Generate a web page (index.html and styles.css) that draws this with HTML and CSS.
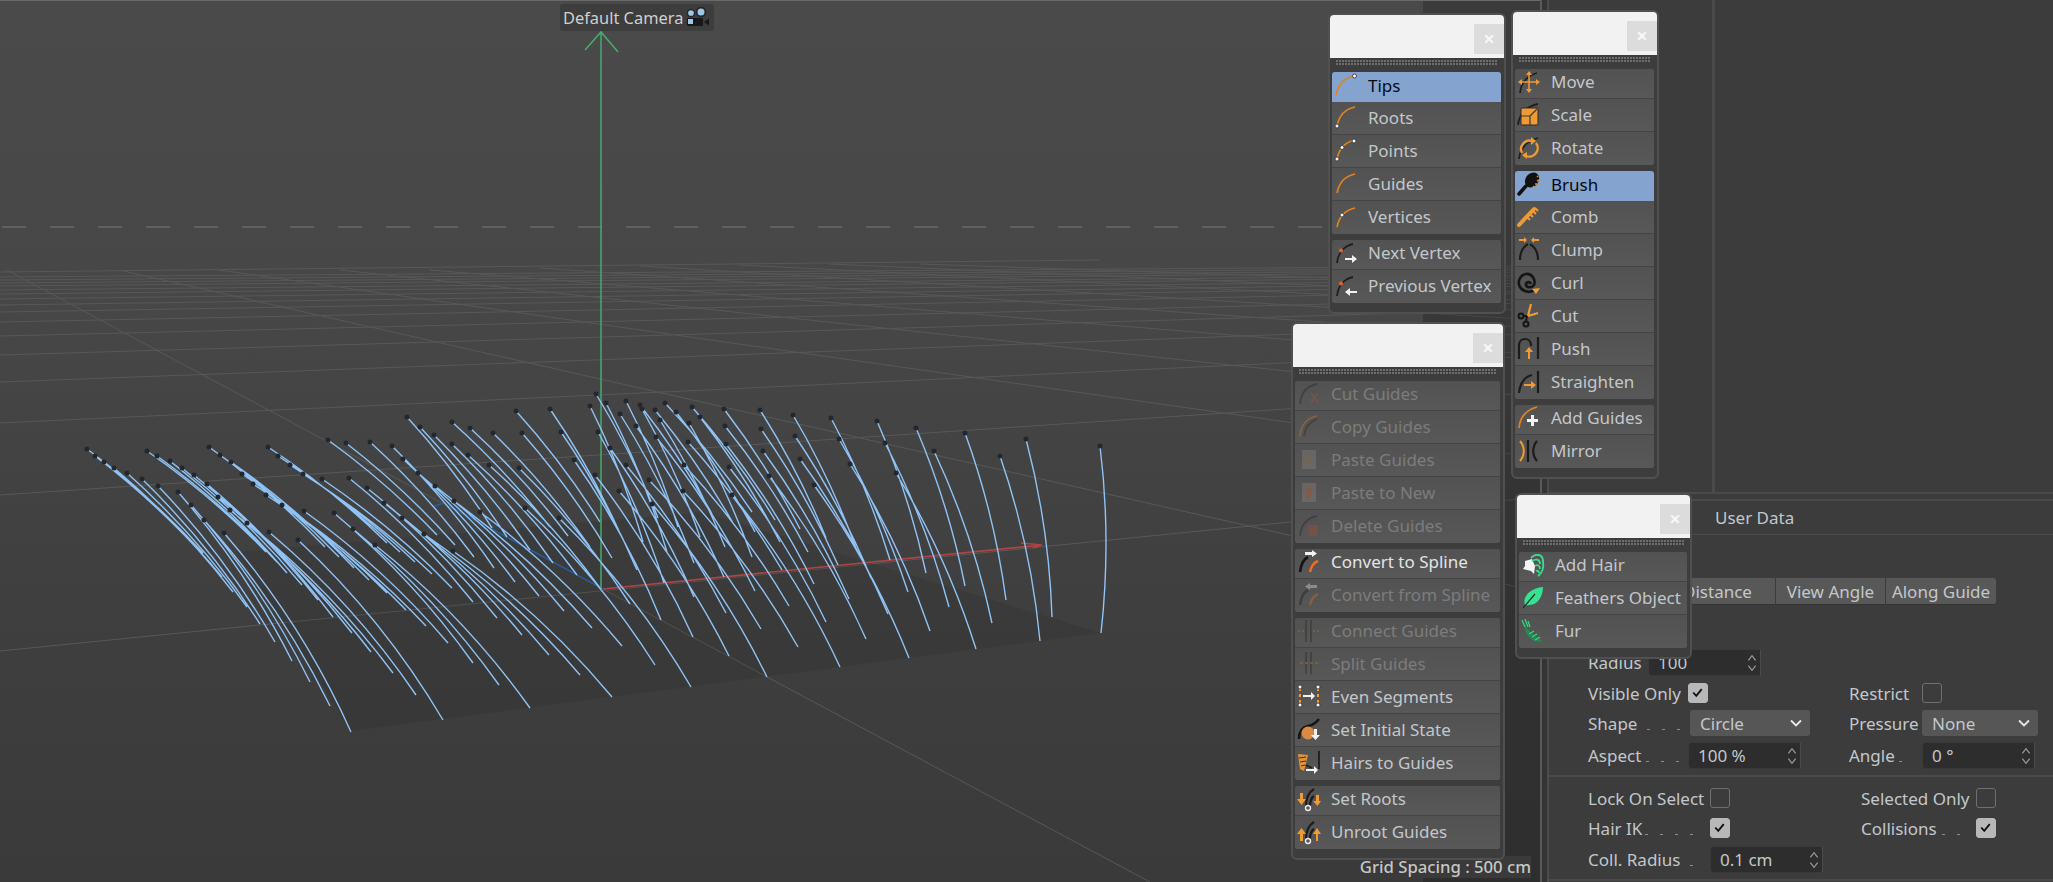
FILE: index.html
```html
<!DOCTYPE html>
<html lang="en">
<head>
<meta charset="utf-8">
<title>Hair tools</title>
<link rel="stylesheet" href="styles.css">
</head>
<body>
<div class="app">
  <main class="viewport">
    <svg class="scene" width="1540" height="882" viewBox="0 0 1540 882">
      <path class="grid" d="M0 651L1540 497M0 495L1540 392M0 423L1540 351M0 382L1540 325M0 355L1540 309M0 336L1540 299M0 322L1540 291M0 312L1540 286M0 305L1540 283M0 299L1540 280M0 294L1540 277M0 290L1540 275M0 286L1540 272M0 283L1540 270M0 280L1540 268M0 277L1540 266M0 272L1100 260M7 270L1150 882M119 270L1540 592M219 270L1540 458M340 270L1540 398M430 270L1540 360M540 268L1540 337M640 266L1540 320M740 265L1540 305M830 264L1540 295M920 264L1540 285"/>
      <path class="horizon" d="M2 227H1330"/>
      <path class="plane" d="M237 552L703 512L1101 633L351 731Z"/>
      <path class="axis-blue" d="M603 589L444 503L434 506"/>
      <path class="axis-red" d="M603 589L1042 545L1021 543M1042 545L1033 548"/>
      <path class="axis-green" d="M601 589V32M585 50L601 32L618 52"/>
      <path class="hairs" d="M87 449A800 800 0 0 1 203 553M95 456A800 800 0 0 1 212 565M104 462A800 800 0 0 1 222 577M114 468A800 800 0 0 1 233 592M127 473A800 800 0 0 1 247 607M142 479A800 800 0 0 1 260 624M158 486A800 800 0 0 1 275 642M178 492A800 800 0 0 1 292 661M191 505A800 800 0 0 1 310 682M204 520A800 800 0 0 1 330 706M224 533A800 800 0 0 1 351 732
      M147 451A800 800 0 0 1 266 552M157 456A800 800 0 0 1 277 562M170 461A800 800 0 0 1 287 573M182 468A800 800 0 0 1 302 585M194 475A800 800 0 0 1 318 600M207 484A800 800 0 0 1 333 617M218 497A800 800 0 0 1 352 633M230 510A800 800 0 0 1 371 652M247 523A800 800 0 0 1 393 673M269 532A800 800 0 0 1 416 695M298 540A800 800 0 0 1 443 720
      M209 447A800 800 0 0 1 325 547M220 455A800 800 0 0 1 339 557M231 462A800 800 0 0 1 354 568M242 474A800 800 0 0 1 369 580M253 484A800 800 0 0 1 387 593M266 495A800 800 0 0 1 406 610M282 505A800 800 0 0 1 426 626M304 511A800 800 0 0 1 448 643M334 513A800 800 0 0 1 473 663M353 529A800 800 0 0 1 499 685M375 545A800 800 0 0 1 530 708
      M268 447A800 800 0 0 1 387 543M278 456A800 800 0 0 1 400 552M290 465A800 800 0 0 1 415 562M303 474A800 800 0 0 1 432 574M322 479A800 800 0 0 1 452 588M349 478A800 800 0 0 1 473 602M367 488A800 800 0 0 1 497 618M384 503A800 800 0 0 1 522 635M402 518A800 800 0 0 1 549 655M424 534A800 800 0 0 1 580 675M453 551A800 800 0 0 1 612 697
      M328 440A800 800 0 0 1 437 535M346 443A800 800 0 0 1 455 545M370 442A800 800 0 0 1 474 557M392 446A800 800 0 0 1 494 568M403 459A800 800 0 0 1 515 582M418 473A800 800 0 0 1 539 596M435 486A800 800 0 0 1 564 611M454 501A800 800 0 0 1 592 628M480 512A800 800 0 0 1 622 646M525 508A800 800 0 0 1 655 665M559 518A800 800 0 0 1 691 687
      M407 417A800 800 0 0 1 492 528M420 427A800 800 0 0 1 507 537M434 435A800 800 0 0 1 530 550M452 444A800 800 0 0 1 553 563M468 455A800 800 0 0 1 577 575M489 465A800 800 0 0 1 600 588M519 468A800 800 0 0 1 630 604M574 460A800 800 0 0 1 661 620M595 475A800 800 0 0 1 693 637M619 491A800 800 0 0 1 729 656M652 504A800 800 0 0 1 767 677
      M452 422A800 800 0 0 1 550 527M470 428A800 800 0 0 1 568 536M493 433A800 800 0 0 1 590 547M522 433A800 800 0 0 1 612 558M561 432A800 800 0 0 1 637 570M598 432A800 800 0 0 1 664 583M610 448A800 800 0 0 1 694 597M626 465A800 800 0 0 1 726 613M649 480A800 800 0 0 1 761 629M683 491A800 800 0 0 1 798 647M732 495A800 800 0 0 1 840 667
      M516 411A800 800 0 0 1 600 522M550 409A800 800 0 0 1 619 531M590 406A800 800 0 0 1 643 542M606 403A800 800 0 0 1 667 552M620 414A800 800 0 0 1 694 563M636 426A800 800 0 0 1 724 577M656 437A800 800 0 0 1 755 591M684 465A800 800 0 0 1 789 606M729 467A800 800 0 0 1 826 622M769 476A800 800 0 0 1 866 639M814 485A800 800 0 0 1 909 658
      M596 394A800 800 0 0 1 658 518M626 401A800 800 0 0 1 678 527M642 409A800 800 0 0 1 700 537M660 420A800 800 0 0 1 725 547M689 423A800 800 0 0 1 752 557M688 442A800 800 0 0 1 782 570M726 444A800 800 0 0 1 814 584M763 451A800 800 0 0 1 849 599M800 459A800 800 0 0 1 888 614M850 464A800 800 0 0 1 930 631M896 473A800 800 0 0 1 976 649
      M640 405A800 800 0 0 1 712 514M655 410A800 800 0 0 1 733 523M676 412A800 800 0 0 1 755 532M700 417A800 800 0 0 1 780 542M725 426A800 800 0 0 1 808 552M761 429A800 800 0 0 1 838 565M795 436A800 800 0 0 1 871 578M839 439A800 800 0 0 1 908 592M885 443A800 800 0 0 1 949 607M934 451A800 800 0 0 1 992 623M1000 456A800 800 0 0 1 1040 641
      M665 403A800 800 0 0 1 752 512M692 407A800 800 0 0 1 775 520M724 409A800 800 0 0 1 800 529M760 410A800 800 0 0 1 826 538M793 415A800 800 0 0 1 856 548M831 418A800 800 0 0 1 890 560M877 421A800 800 0 0 1 926 573M916 428A800 800 0 0 1 965 586M965 433A800 800 0 0 1 1006 600M1026 439A800 800 0 0 1 1052 617M1100 446A800 800 0 0 1 1101 633"/>
      <path class="roots" d="M87 449h0M95 456h0M104 462h0M114 468h0M127 473h0M142 479h0M158 486h0M178 492h0M191 505h0M204 520h0M224 533h0M147 451h0M157 456h0M170 461h0M182 468h0M194 475h0M207 484h0M218 497h0M230 510h0M247 523h0M269 532h0M298 540h0M209 447h0M220 455h0M231 462h0M242 474h0M253 484h0M266 495h0M282 505h0M304 511h0M334 513h0M353 529h0M375 545h0M268 447h0M278 456h0M290 465h0M303 474h0M322 479h0M349 478h0M367 488h0M384 503h0M402 518h0M424 534h0M453 551h0M328 440h0M346 443h0M370 442h0M392 446h0M403 459h0M418 473h0M435 486h0M454 501h0M480 512h0M525 508h0M559 518h0M407 417h0M420 427h0M434 435h0M452 444h0M468 455h0M489 465h0M519 468h0M574 460h0M595 475h0M619 491h0M652 504h0M452 422h0M470 428h0M493 433h0M522 433h0M561 432h0M598 432h0M610 448h0M626 465h0M649 480h0M683 491h0M732 495h0M516 411h0M550 409h0M590 406h0M606 403h0M620 414h0M636 426h0M656 437h0M684 465h0M729 467h0M769 476h0M814 485h0M596 394h0M626 401h0M642 409h0M660 420h0M689 423h0M688 442h0M726 444h0M763 451h0M800 459h0M850 464h0M896 473h0M640 405h0M655 410h0M676 412h0M700 417h0M725 426h0M761 429h0M795 436h0M839 439h0M885 443h0M934 451h0M1000 456h0M665 403h0M692 407h0M724 409h0M760 410h0M793 415h0M831 418h0M877 421h0M916 428h0M965 433h0M1026 439h0M1100 446h0"/>
    </svg>
    <div class="shade"></div>
    <div class="camera-label">
      <span>Default Camera</span>
      <svg width="26" height="22" viewBox="0 0 26 22"><circle cx="6" cy="6" r="3.6" fill="#9cc8e8" stroke="#23262c" stroke-width="1.5"/><circle cx="16" cy="5" r="4.4" fill="#9cc8e8" stroke="#23262c" stroke-width="1.8"/><rect x="2" y="11" width="16" height="8" rx="1" fill="#16181c"/><rect x="3" y="12" width="5" height="5" fill="#9cc8e8"/><path d="M19 15l5-3.5v7z" fill="#16181c"/></svg>
    </div>
    <div class="grid-spacing">Grid Spacing : 500 cm</div>
  </main>

  <div class="gutter"></div>

  <aside class="side">
    <div class="objects"><div class="objects-col"></div></div>
    <section class="attrs">
      <header class="attrs-head">
        <span>User Data</span>
        <span class="nav">
          <svg width="26" height="20" viewBox="0 0 26 20"><path d="M25 10H4M11 2L3 10l8 8" fill="none" stroke="#a6a6a6" stroke-width="3"/></svg>
          <svg width="24" height="20" viewBox="0 0 24 20"><path d="M0 10h21M14 2l8 8-8 8" fill="none" stroke="#565656" stroke-width="3"/></svg>
        </span>
      </header>
      <div class="tabs">
        <span class="tab tab-distance">Distance</span>
        <span class="tab tab-view">View Angle</span>
        <span class="tab tab-along">Along Guide</span>
      </div>
      <div class="row row-radius">
        <span class="lbl lbl-radius">Radius</span>
        <span class="field field-radius">100<svg class="spin" viewBox="0 0 12 22"><path d="M2 8l4-5 4 5M2 14l4 5 4-5"/></svg></span>
      </div>
      <div class="row">
        <div class="cell">
          <span class="lbl lbl-a">Visible Only</span>
          <span class="check on"><svg viewBox="0 0 20 20"><path d="M5 10l3.5 4L15 6"/></svg></span>
        </div>
        <div class="cell">
          <span class="lbl lbl-r">Restrict</span>
          <span class="check"></span>
        </div>
      </div>
      <div class="row">
        <div class="cell">
          <span class="lbl lbl-b"><span>Shape</span><i class="dots d3"></i></span>
          <span class="select select-shape">Circle<svg class="chev" viewBox="0 0 12 8"><path d="M1 1.500l5 5 5-5"/></svg></span>
        </div>
        <div class="cell">
          <span class="lbl lbl-r">Pressure</span>
          <span class="select select-pressure">None<svg class="chev" viewBox="0 0 12 8"><path d="M1 1.500l5 5 5-5"/></svg></span>
        </div>
      </div>
      <div class="row row-aspect">
        <div class="cell">
          <span class="lbl lbl-a"><span>Aspect</span><i class="dots d3"></i></span>
          <span class="field field-aspect">100 %<svg class="spin" viewBox="0 0 12 22"><path d="M2 8l4-5 4 5M2 14l4 5 4-5"/></svg></span>
        </div>
        <div class="cell">
          <span class="lbl lbl-r lbl-angle"><span>Angle</span><i class="dots d1"></i></span>
          <span class="field field-aspect">0 °<svg class="spin" viewBox="0 0 12 22"><path d="M2 8l4-5 4 5M2 14l4 5 4-5"/></svg></span>
        </div>
      </div>
      <div class="sep sep-mid"></div>
      <div class="row">
        <div class="cell cell-low">
          <span class="lbl lbl-c">Lock On Select</span>
          <span class="check"></span>
        </div>
        <div class="cell">
          <span class="lbl lbl-s">Selected Only</span>
          <span class="check"></span>
        </div>
      </div>
      <div class="row">
        <div class="cell cell-low">
          <span class="lbl lbl-c lbl-pad"><span>Hair IK</span><i class="dots d4"></i></span>
          <span class="check on"><svg viewBox="0 0 20 20"><path d="M5 10l3.5 4L15 6"/></svg></span>
        </div>
        <div class="cell">
          <span class="lbl lbl-s lbl-coll"><span>Collisions</span><i class="dots d2"></i></span>
          <span class="check on"><svg viewBox="0 0 20 20"><path d="M5 10l3.5 4L15 6"/></svg></span>
        </div>
      </div>
      <div class="row row-coll">
        <span class="lbl lbl-c lbl-pad"><span>Coll. Radius</span><i class="dots d1"></i></span>
        <span class="field field-aspect">0.1 cm<svg class="spin" viewBox="0 0 12 22"><path d="M2 8l4-5 4 5M2 14l4 5 4-5"/></svg></span>
      </div>
      <div class="sep sep-end"></div>
    </section>
  </aside>

  <!-- Floating tool palettes -->
  <div class="palette p-select">
    <div class="title"><span class="close">×</span></div>
    <div class="grip"></div>
    <div class="group">
      <div class="item active"><svg class="ic" viewBox="0 0 24 24"><path class="o" d="M2 22C4 12 10 5 20 3"/><circle class="w" cx="20.500" cy="3" r="2"/></svg>Tips</div>
      <div class="item"><svg class="ic" viewBox="0 0 24 24"><path class="o" d="M3 21C5 11 11 4 21 2"/><circle class="w" cx="3" cy="21" r="2"/></svg>Roots</div>
      <div class="item"><svg class="ic" viewBox="0 0 24 24"><path class="o" d="M3 21C5 11 11 4 21 2"/><circle class="w" cx="3" cy="21" r="2"/><circle class="w" cx="8" cy="9.500" r="2"/><circle class="w" cx="20" cy="3" r="2"/></svg>Points</div>
      <div class="item"><svg class="ic" viewBox="0 0 24 24"><path class="o" d="M3 22C5 12 11 5 21 3"/></svg>Guides</div>
      <div class="item"><svg class="ic" viewBox="0 0 24 24"><path class="o" d="M3 22C5 12 11 5 21 3"/><circle class="w" cx="8" cy="10" r="2"/></svg>Vertices</div>
    </div>
    <div class="group">
      <div class="item"><svg class="ic" viewBox="0 0 24 24"><path class="k" d="M3 22C4 12 10 5 19 3"/><circle cx="7" cy="9.500" r="2" fill="#e8602c"/><path class="wf" d="M11 17h7v-3l5 4-5 4v-3h-7z"/></svg>Next Vertex</div>
      <div class="item"><svg class="ic" viewBox="0 0 24 24"><path class="k" d="M3 22C4 12 10 5 19 3"/><circle cx="7" cy="9.500" r="2" fill="#e8602c"/><path class="wf" d="M23 17h-7v-3l-5 4 5 4v-3h7z"/></svg>Previous Vertex</div>
    </div>
  </div>

  <div class="palette p-tools">
    <div class="title"><span class="close">×</span></div>
    <div class="grip"></div>
    <div class="group">
      <div class="item"><svg class="ic" viewBox="0 0 24 24"><path class="k" d="M3 23C4 13 10 6 20 3"/><path class="o1" d="M3 12h18M12 3v18"/><path class="of" d="M12 1l3 4H9zM12 23l3-4H9zM23 12l-4 3V9zM1 12l4 3V9z"/></svg>Move</div>
      <div class="item"><svg class="ic" viewBox="0 0 24 24"><path class="k" d="M1 23C2 12 10 4 21 2"/><rect x="4" y="6" width="17" height="17" rx="1" fill="#f09a33" stroke="#2a2a2a"/><path d="M4 14h9v9M13 14l7-7" fill="none" stroke="#3a3a3a" stroke-width="1.200"/></svg>Scale</div>
      <div class="item"><svg class="ic" viewBox="0 0 24 24"><path class="k" d="M2 23C3 12 10 5 21 2"/><path d="M5 17A8.500 8.500 0 0 1 15 5M19 7A8.500 8.500 0 0 1 9 20" fill="none" stroke="#f09a33" stroke-width="2.400"/><path class="of" d="M14 1l5 4-5 4zM10 23l-5-4 5-3z"/></svg>Rotate</div>
    </div>
    <div class="group">
      <div class="item active"><svg class="ic" viewBox="0 0 24 24"><path d="M2 22l7-8" fill="none" stroke="#111" stroke-width="3.500" stroke-linecap="round"/><ellipse cx="15" cy="8" rx="6.500" ry="8" transform="rotate(40 15 8)" fill="#111"/><path d="M21 4l-1 1M22 8l-2 1M20 12l-2 0M17 15l-1-1" stroke="#e38a26" stroke-width="1.500"/></svg>Brush</div>
      <div class="item"><svg class="ic" viewBox="0 0 24 24"><path d="M2 21L17 5" fill="none" stroke="#f09a33" stroke-width="4" stroke-linecap="round"/><path d="M10 13l3 3M13 10l3 3M16 7l3 3M18 4l3 3" stroke="#f09a33" stroke-width="2"/></svg>Comb</div>
      <div class="item"><svg class="ic" viewBox="0 0 24 24"><path class="k2" d="M3 23C3 15 6 10 11 7M21 23C21 15 18 10 13 7"/><path class="of" d="M2 2h5V0l3 3-3 3V4H2zM22 2h-5V0l-3 3 3 3V4h5z"/></svg>Clump</div>
      <div class="item"><svg class="ic" viewBox="0 0 24 24"><path d="M14 14c-1-3-6-2-5 1s6 3 8 0c2-5-2-12-8-11C3 5 0 12 3 17s11 6 14 3" fill="none" stroke="#151515" stroke-width="2.600"/><path class="of" d="M15 19l8-1-4 6z"/></svg>Curl</div>
      <div class="item"><svg class="ic" viewBox="0 0 24 24"><circle cx="4" cy="13" r="2.500" fill="none" stroke="#151515" stroke-width="2"/><circle cx="9" cy="21" r="2.500" fill="none" stroke="#151515" stroke-width="2"/><path d="M6 13h5M9 18l1-5" stroke="#151515" stroke-width="2"/><path d="M11 13L14 1M11 13l10-3" stroke="#f09a33" stroke-width="2.200" fill="none"/></svg>Cut</div>
      <div class="item"><svg class="ic" viewBox="0 0 24 24"><path class="k2" d="M2 23V9c0-8 12-8 12 0v1M21 1v22"/><path class="of" d="M11 23v-7H8l4-5 4 5h-3v7z"/></svg>Push</div>
      <div class="item"><svg class="ic" viewBox="0 0 24 24"><path class="k2" d="M2 23C3 13 7 7 15 5M21 1v22"/><path class="of" d="M7 14h7v-3l5 4-5 4v-3H7z"/></svg>Straighten</div>
    </div>
    <div class="group">
      <div class="item"><svg class="ic" viewBox="0 0 24 24"><path class="o" d="M2 22C3 11 9 4 20 1"/><path class="wf" d="M14 9h3v4h4v3h-4v4h-3v-4h-4v-3h4z"/></svg>Add Guides</div>
      <div class="item"><svg class="ic" viewBox="0 0 24 24"><path class="o2" d="M3 2c5 6 5 14 0 20"/><path class="k2" d="M11 1v22M20 2c-5 6-5 14 0 20"/></svg>Mirror</div>
    </div>
  </div>

  <div class="palette p-edit">
    <div class="title"><span class="close">×</span></div>
    <div class="grip"></div>
    <div class="group">
      <div class="item off"><svg class="ic" viewBox="0 0 24 24"><path class="k" d="M3 22C4 11 10 4 20 2"/><path d="M14 11l7 10M21 11l-7 10" stroke="#b0553a" stroke-width="1.400"/></svg>Cut Guides</div>
      <div class="item off"><svg class="ic" viewBox="0 0 24 24"><path class="o" d="M3 22C4 11 10 4 20 2"/><path class="k" d="M7 22C8 13 12 8 20 5"/></svg>Copy Guides</div>
      <div class="item off"><svg class="ic" viewBox="0 0 24 24"><rect x="5" y="3" width="14" height="19" fill="#8a8a8a"/><path d="M8 19c0-5 3-9 8-10" fill="none" stroke="#d97c1e" stroke-width="2.500"/></svg>Paste Guides</div>
      <div class="item off"><svg class="ic" viewBox="0 0 24 24"><rect x="5" y="3" width="14" height="19" fill="#8a8a8a"/><path d="M8 8h8l-1 6-3 6-3-4z" fill="#d0683a"/></svg>Paste to New</div>
      <div class="item off"><svg class="ic" viewBox="0 0 24 24"><path class="k" d="M3 22C4 11 10 4 20 2"/><path d="M11 11h10l-1 11h-8z" fill="#a84a36"/></svg>Delete Guides</div>
    </div>
    <div class="group">
      <div class="item on"><svg class="ic" viewBox="0 0 24 24"><path class="k3" d="M3 22C4 14 7 9 11 7"/><path d="M13 22c1-5 3-9 8-11" fill="none" stroke="#f06a24" stroke-width="2.500"/><path class="wf" d="M8 2h7V0l5 3.500-5 3.500V5H8z"/></svg>Convert to Spline</div>
      <div class="item off"><svg class="ic" viewBox="0 0 24 24"><path class="k3" d="M3 22C4 14 7 9 11 7"/><path d="M13 22c1-5 3-9 8-11" fill="none" stroke="#f06a24" stroke-width="2.500"/><path class="wf" d="M20 2h-7V0L8 3.500 13 7V5h7z"/></svg>Convert from Spline</div>
    </div>
    <div class="group">
      <div class="item off"><svg class="ic" viewBox="0 0 24 24"><path class="k" d="M9 1v22M14 1v22"/><path d="M1 12h6M16 12h6" stroke="#d97c1e" stroke-dasharray="2 2" stroke-width="1.500"/></svg>Connect Guides</div>
      <div class="item off"><svg class="ic" viewBox="0 0 24 24"><path class="k" d="M9 1v22M14 1v22"/><path d="M3 12h18" stroke="#d97c1e" stroke-dasharray="3 2" stroke-width="1.500"/></svg>Split Guides</div>
      <div class="item"><svg class="ic" viewBox="0 0 24 24"><path d="M3 4v16M21 4v16" stroke="#f09a33" stroke-width="2" stroke-dasharray="3 3"/><circle class="w" cx="3" cy="3" r="2"/><circle class="w" cx="3" cy="21" r="2"/><circle class="w" cx="21" cy="3" r="2"/><circle class="w" cx="21" cy="21" r="2"/><path class="wf" d="M6 11h8V8l4 4-4 4v-3H6z"/></svg>Even Segments</div>
      <div class="item"><svg class="ic" viewBox="0 0 24 24"><path class="k3" d="M2 22C2 13 6 10 11 9s8-3 11-7"/><circle cx="11" cy="16" r="6.500" fill="#d98a45"/><path class="wf" d="M17 12h3v6h3l-4.500 5-4.500-5h3z"/></svg>Set Initial State</div>
      <div class="item"><svg class="ic" viewBox="0 0 24 24"><path d="M1 3l10 1-4 16-4-2z" fill="#e59434"/><path d="M2 7l7-1M3 11l6-1M4 15l4-1" stroke="#333" stroke-width="1"/><path class="k" d="M9 14l6 3M22 0v18"/><path class="wf" d="M9 18h8v-3l4 4-4 4v-3H9z"/></svg>Hairs to Guides</div>
    </div>
    <div class="group">
      <div class="item"><svg class="ic" viewBox="0 0 24 24"><path class="k2" d="M9 19C9 11 12 5 17 2M13 19c0-5 1-8 4-10"/><circle cx="11" cy="21" r="2.500" fill="none" stroke="#e8e8e8" stroke-width="1.400"/><path class="of" d="M3 6h3v6h3l-4.500 6L0 12h3zM19 8h3v6h2l-3.500 5-4.500-5h3z"/></svg>Set Roots</div>
      <div class="item"><svg class="ic" viewBox="0 0 24 24"><path class="k2" d="M9 19C9 11 12 5 17 2M13 19c0-5 1-8 4-10"/><circle cx="11" cy="21" r="2.500" fill="none" stroke="#e8e8e8" stroke-width="1.400"/><path class="of" d="M3 21v-7H0l4.500-6L9 14H6v7zM19 21v-7h-3l4-6 4 6h-3v7z"/></svg>Unroot Guides</div>
    </div>
  </div>

  <div class="palette p-hair">
    <div class="title"><span class="close">×</span></div>
    <div class="grip"></div>
    <div class="group">
      <div class="item"><svg class="ic" viewBox="0 0 24 24"><path d="M4 8L11 6l3 7-1 8-3-3-8-2 2-3z" fill="#f4f4f4"/><path d="M10 5c4-5 12-4 12 3 1 6-1 12-5 15M11 8c5-3 8-1 8 3M14 13c3-2 5 0 5 3M15 18c2-1 3 1 3 2" fill="none" stroke="#3fdc8c" stroke-width="1.800"/></svg>Add Hair</div>
      <div class="item"><svg class="ic" viewBox="0 0 24 24"><path d="M4 20C1 12 9 3 22 2c0 10-6 20-18 18z" fill="#35e28f"/><path d="M2 23L14 9" stroke="#2b2b2b" stroke-width="1.200"/></svg>Feathers Object</div>
      <div class="item"><svg class="ic" viewBox="0 0 24 24"><path d="M3 3c3 6 5 9 9 12s6 5 10 7c-6 2-10 0-14-4S4 9 3 3z" fill="#1f8a52"/><path d="M1 1l3 7M4 0l3 8M7 2l2 6M8 15l5-3M11 18l5-3M14 21l5-3" stroke="#39d884" stroke-width="1.200"/></svg>Fur</div>
    </div>
  </div>
</div>
</body>
</html>
```
FILE: styles.css
```css
* { box-sizing: border-box; }
html, body { margin: 0; padding: 0; background: #3c3c3c; }
body {
  font-family: "Noto Sans", "Open Sans", sans-serif;
  font-size: 17px;
  color: #c3c7cb;
  overflow: hidden;
}
.app {
  position: relative;
  display: flex;
  width: 2053px;
  height: 882px;
  overflow: hidden;
}

/* ---------- 3D viewport ---------- */
.viewport {
  position: relative;
  flex: 0 0 1540px;
  height: 882px;
  background: linear-gradient(180deg, #4a4a4a 0, #474747 300px, #3f3f3f 600px, #3a3a3a 882px);
  border-top: 1px solid #6a6a6a;
  overflow: hidden;
}
.scene { display: block; position: absolute; left: 0; top: -1px; }
.grid { fill: none; stroke: #585858; stroke-width: 1; }
.horizon { fill: none; stroke: #686868; stroke-width: 1.4; stroke-dasharray: 24 24; }
.plane { fill: rgba(0, 0, 0, 0.08); }
.axis-blue { fill: none; stroke: #1f5fa8; stroke-width: 1.4; }
.axis-red { fill: none; stroke: #b04444; stroke-width: 1.6; }
.axis-green { fill: none; stroke: #47ab6c; stroke-width: 1.5; }
.hairs { fill: none; stroke: #8fc3f5; stroke-width: 1.4; }
.roots { fill: none; stroke: #23272e; stroke-width: 5; stroke-linecap: round; }
.shade {
  position: absolute;
  left: 1423px;
  right: 0;
  top: 0;
  bottom: 0;
  background: rgba(0, 0, 0, 0.2);
}
.camera-label {
  position: absolute;
  left: 560px;
  top: 3px;
  width: 154px;
  height: 27px;
  display: flex;
  align-items: center;
  gap: 2px;
  padding-left: 3px;
  border-radius: 3px;
  background: #3d3d3d;
  color: #cfcfcf;
  font-size: 16.400px;
  white-space: nowrap;
}
.grid-spacing {
  position: absolute;
  right: 9px;
  bottom: 4px;
  height: 22px;
  padding-left: 4px;
  line-height: 22px;
  background: #3a3a3a;
  color: #c6c6c6;
  font-weight: 500;
  font-size: 16.700px;
  white-space: nowrap;
}

/* ---------- side panels ---------- */
.gutter {
  flex: 0 0 9px;
  background: #343434;
  border-left: 2px solid #5a5a5a;
  border-right: 2px solid #4c4c4c;
}
.side {
  flex: 1 1 auto;
  display: flex;
  flex-direction: column;
  background: #3c3c3c;
}
.objects {
  flex: 0 0 494px;
  border-bottom: 2px solid #4a4a4a;
}
.objects-col {
  width: 166px;
  height: 100%;
  border-right: 3px solid #4a4a4a;
}
.attrs { flex: 1 1 auto; border-top: 2px solid #4a4a4a; margin-top: 5px; }
.attrs-head {
  display: flex;
  justify-content: space-between;
  align-items: center;
  height: 34px;
  padding: 0 5px 0 166px;
  border-bottom: 1px solid #4a4a4a;
}
.nav { display: flex; align-items: center; gap: 3px; }
.tabs {
  display: flex;
  gap: 1px;
  height: 27px;
  margin: 43px 0 0 111px;
}
.tab {
  display: flex;
  align-items: center;
  justify-content: center;
  background: #585858;
  border-bottom: 1px solid #333;
}
.tab-distance { width: 115px; }
.tab-view { width: 109px; }
.tab-along { width: 110px; border-radius: 0 3px 3px 0; }

.row {
  display: flex;
  align-items: center;
  height: 30px;
  padding-left: 39px;
  white-space: nowrap;
}
.row-radius { margin-top: 41px; height: 32px; }
.row-aspect { margin-top: 2px; }
.row-coll { margin-top: 1px; }
.cell { display: flex; align-items: center; width: 261px; flex: none; }
.cell-low { width: 273px; }
.lbl { display: flex; justify-content: space-between; flex: none; }
.lbl-radius { width: 60px; }
.lbl-a { width: 100px; padding-right: 9px; }
.lbl-b { width: 102px; padding-right: 10px; }
.lbl-c { width: 122px; }
.lbl-r { width: 73px; }
.lbl-s { width: 115px; }
.lbl-pad { padding-right: 17px; }
.lbl-angle { padding-right: 20px; }
.lbl-coll { padding-right: 16px; }
.dots {
  display: block;
  height: 1px;
  margin-top: 17px;
  background: repeating-linear-gradient(90deg, #8c8c8c 0 3px, transparent 3px 15px);
}
.d1 { width: 3px; }
.d2 { width: 18px; }
.d3 { width: 33px; }
.d4 { width: 48px; }

.field {
  position: relative;
  display: flex;
  align-items: center;
  height: 27px;
  width: 113px;
  padding-left: 9px;
  background: #2d2d2d;
  border: 1px solid #3a3a3a;
  border-right: 1px solid #4c4c4c;
  border-radius: 4px 0 0 4px;
}
.spin {
  position: absolute;
  right: 2px;
  top: 3px;
  width: 12px;
  height: 20px;
  fill: none;
  stroke: #9a9a9a;
  stroke-width: 1.4;
}
.select {
  position: relative;
  display: flex;
  align-items: center;
  height: 26px;
  padding-left: 10px;
  background: #565656;
  border-radius: 3px;
}
.select-shape { width: 120px; }
.select-pressure { width: 116px; }
.chev {
  position: absolute;
  right: 8px;
  top: 9px;
  width: 12px;
  height: 8px;
  fill: none;
  stroke: #e8e8e8;
  stroke-width: 1.800;
}
.check {
  display: block;
  width: 20px;
  height: 20px;
  border: 1.5px solid #6f6f6f;
  border-radius: 3px;
}
.check.on { background: #b8b8b8; border-color: #b8b8b8; }
.check svg { display: block; width: 17px; height: 17px; fill: none; stroke: #111; stroke-width: 2.200; }
.sep { height: 2px; background: #4a4a4a; }
.sep-mid { margin-top: 5px; margin-bottom: 6px; }
.sep-end { margin-top: 5px; }

/* ---------- floating palettes ---------- */
.palette {
  position: absolute;
  background: #3d3d3d;
  border: 2px solid #505050;
  border-radius: 6px;
  padding-bottom: 9px;
}
.p-select { left: 1328px; top: 13px; width: 178px; }
.p-tools { left: 1511px; top: 10px; width: 148px; }
.p-edit { left: 1291px; top: 322px; width: 214px; }
.p-hair { left: 1515px; top: 493px; width: 177px; }
.title {
  display: flex;
  justify-content: flex-end;
  height: 43px;
  padding-top: 9px;
  background: #f2f2f2;
  border-radius: 4px 4px 0 0;
}
.close {
  width: 30px;
  height: 30px;
  background: #dcdcdc;
  color: #f7f7f7;
  font-size: 20px;
  font-weight: 700;
  line-height: 29px;
  text-align: center;
}
.grip {
  height: 6px;
  margin: 2px 6px 6px;
  background-image: radial-gradient(circle at 1px 1px, #6e6e6e 0.9px, transparent 1px);
  background-size: 3px 3px;
}
.group {
  margin: 0 3px 6px 2px;
  background: #555;
  border-radius: 3px;
  overflow: hidden;
}
.group:last-child { margin-bottom: 0; }
.item {
  display: flex;
  align-items: center;
  gap: 10px;
  height: 33px;
  padding: 0 0 2px 2px;
  border-bottom: 1px solid #444;
  background: linear-gradient(180deg, #525252, #585858);
  white-space: nowrap;
}
.item:first-child { height: 30px; padding-bottom: 4px; }
.item:last-child { border-bottom: 0; }
.item.active { background: #84a3cf; color: #070b14; border-bottom: 0; }
.item.off { color: #7c7c7c; }
.item.off .ic { opacity: 0.35; }
.item.on { color: #e2e4e6; }
.ic {
  flex: none;
  width: 24px;
  height: 24px;
  overflow: visible;
}
.o { fill: none; stroke: #e0821f; stroke-width: 1.700; }
.o1 { fill: none; stroke: #f09a33; stroke-width: 1.500; }
.o2 { fill: none; stroke: #f09a33; stroke-width: 2; }
.k { fill: none; stroke: #1f1f1f; stroke-width: 1.800; }
.k2 { fill: none; stroke: #1c1c1c; stroke-width: 2.200; }
.k3 { fill: none; stroke: #151515; stroke-width: 2.600; }
.of { fill: #f09a33; }
.w { fill: #f4f4f4; stroke: #2e2e2e; stroke-width: 0.800; }
.wf { fill: #f2f2f2; }
```
